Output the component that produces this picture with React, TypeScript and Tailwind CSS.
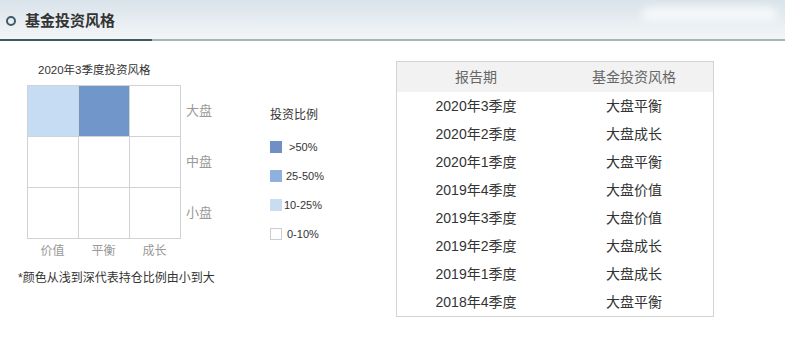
import React from "react";

const rows: [string, string][] = [
  ["2020年3季度", "大盘平衡"],
  ["2020年2季度", "大盘成长"],
  ["2020年1季度", "大盘平衡"],
  ["2019年4季度", "大盘价值"],
  ["2019年3季度", "大盘价值"],
  ["2019年2季度", "大盘成长"],
  ["2019年1季度", "大盘成长"],
  ["2018年4季度", "大盘平衡"],
];

const cellColors = [
  "bg-[#c6dcf3]",
  "bg-[#7196c9]",
  "bg-white",
  "bg-white",
  "bg-white",
  "bg-white",
  "bg-white",
  "bg-white",
  "bg-white",
];

export default function App() {
  return (
    <div
      className="w-[785px] h-[338px] bg-white overflow-hidden relative"
      style={{ fontFamily: '"Liberation Sans", "Noto Sans CJK SC", sans-serif' }}
    >
      {/* Header */}
      <div className="relative h-[39px] flex items-center pl-[6px] pt-[3px] bg-gradient-to-b from-[#d9e3ea] to-[#f3f6f8]">
        <div className="w-[10px] h-[10px] rounded-full border-2 border-[#3e5b66]" />
        <div className="ml-[9px] text-[15px] font-semibold text-[#333]">基金投资风格</div>
        <div className="absolute right-[8px] top-[7px] w-[135px] h-[14px] rounded-full bg-white/70 blur-[5px]" />
      </div>
      <div className="flex h-[2px]">
        <div className="w-[152px] bg-[#3d5a60]" />
        <div className="flex-1 bg-[#a4b6b2]" />
      </div>

      {/* Body */}
      <div className="flex">
        {/* Left chart */}
        <div className="w-[270px] shrink-0 pl-[18px] pt-[21px] flex flex-col">
          <div className="ml-[20px] text-[11.5px] leading-[16px] text-[#333]">2020年3季度投资风格</div>
          <div className="mt-[7px] ml-[9px] flex">
            <div className="grid grid-cols-3 border-l border-t border-[#cfd3d8]">
              {cellColors.map((c, i) => (
                <div key={i} className={`w-[51px] h-[51px] border-r border-b border-[#cfd3d8] ${c}`} />
              ))}
            </div>
            <div className="flex flex-col pl-[5px] text-[13px] text-[#999]">
              <div className="h-[51px] flex items-center">大盘</div>
              <div className="h-[51px] flex items-center">中盘</div>
              <div className="h-[51px] flex items-center">小盘</div>
            </div>
          </div>
          <div className="ml-[9px] mt-[4px] flex text-[12px] leading-[16px] text-[#999]">
            <div className="w-[51px] text-center">价值</div>
            <div className="w-[51px] text-center">平衡</div>
            <div className="w-[51px] text-center">成长</div>
          </div>
          <div className="mt-[11px] text-[12px] leading-[16px] text-[#333]">*颜色从浅到深代表持仓比例由小到大</div>
        </div>

        {/* Legend */}
        <div className="w-[126px] shrink-0 pt-[66px] flex flex-col">
          <div className="text-[12px] leading-[16px] text-[#333]">投资比例</div>
          <div className="mt-[16px] flex flex-col gap-[13px] text-[11px] leading-[16px] text-[#333]">
            <div className="flex items-center h-[16px]">
              <div className="w-[12px] h-[12px] bg-[#6f8fc5]" />
              <span className="ml-[7px]">&gt;50%</span>
            </div>
            <div className="flex items-center h-[16px]">
              <div className="w-[12px] h-[12px] bg-[#8fb1de]" />
              <span className="ml-[4px]">25-50%</span>
            </div>
            <div className="flex items-center h-[16px]">
              <div className="w-[12px] h-[12px] bg-[#c8ddf2]" />
              <span className="ml-[2px]">10-25%</span>
            </div>
            <div className="flex items-center h-[16px]">
              <div className="w-[12px] h-[12px] bg-white border border-[#ccc]" />
              <span className="ml-[5px]">0-10%</span>
            </div>
          </div>
        </div>

        {/* Table */}
        <div className="pt-[20px] shrink-0">
          <div className="w-[318px] border border-[#d3d3d3]">
            <div className="flex h-[30px] items-center bg-[#f2f2f2] text-[14px] text-[#666]">
              <div className="flex-1 text-center">报告期</div>
              <div className="flex-1 text-center">基金投资风格</div>
            </div>
            {rows.map(([a, b]) => (
              <div key={a} className="flex h-[28px] items-center text-[14px] text-[#333]">
                <div className="flex-1 text-center">{a}</div>
                <div className="flex-1 text-center">{b}</div>
              </div>
            ))}
          </div>
        </div>
      </div>
    </div>
  );
}
